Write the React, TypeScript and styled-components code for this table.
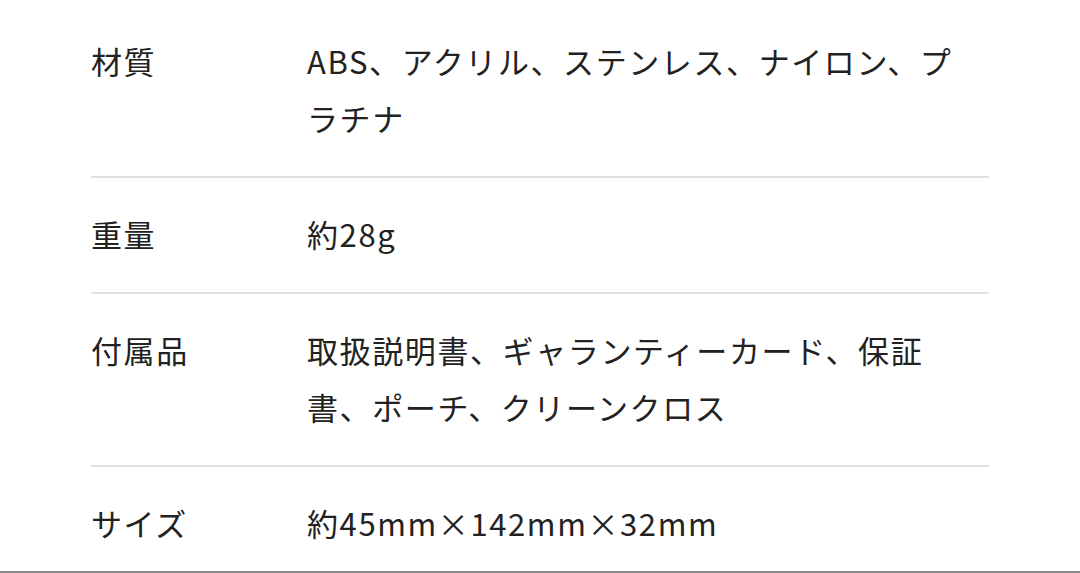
import styled, { createGlobalStyle } from "styled-components";

const GlobalStyle = createGlobalStyle`
  html, body {
    margin: 0;
    padding: 0;
    background: #ffffff;
  }
  body {
    font-family: "Noto Sans CJK JP", "Noto Sans", sans-serif;
    color: #222222;
  }
`;

interface SpecRow {
  label: string;
  value: string;
}

const specs: SpecRow[] = [
  { label: "材質", value: "ABS、アクリル、ステンレス、ナイロン、プラチナ" },
  { label: "重量", value: "約28g" },
  { label: "付属品", value: "取扱説明書、ギャランティーカード、保証書、ポーチ、クリーンクロス" },
  { label: "サイズ", value: "約45mm×142mm×32mm" },
];

export default function App() {
  return (
    <>
      <GlobalStyle />
      <Page>
        <SpecTable>
          {specs.map((row) => (
            <Row key={row.label}>
              <Label>{row.label}</Label>
              <Value>{row.value}</Value>
            </Row>
          ))}
        </SpecTable>
        <BottomBar />
      </Page>
    </>
  );
}

const Page = styled.div`
  width: 1080px;
  height: 573px;
  overflow: hidden;
  display: flex;
  flex-direction: column;
`;

const SpecTable = styled.div`
  flex: 1;
  min-height: 0;
  padding: 5px 91px 0 91px;
  display: flex;
  flex-direction: column;
`;

const Row = styled.div`
  display: grid;
  grid-template-columns: 216px 650px;
  padding: 27px 0 30px;
  border-bottom: 2px solid #e0e0e0;
  font-size: 31px;
  line-height: 57px;
  letter-spacing: 1.6px;
  text-spacing-trim: space-all;

  &:last-child {
    border-bottom: none;
  }
`;

const Label = styled.div`
  color: #222222;
`;

const Value = styled.div`
  color: #222222;
  word-break: break-all;
`;

const BottomBar = styled.div`
  height: 2px;
  background: #8a8a8a;
  flex-shrink: 0;
`;
